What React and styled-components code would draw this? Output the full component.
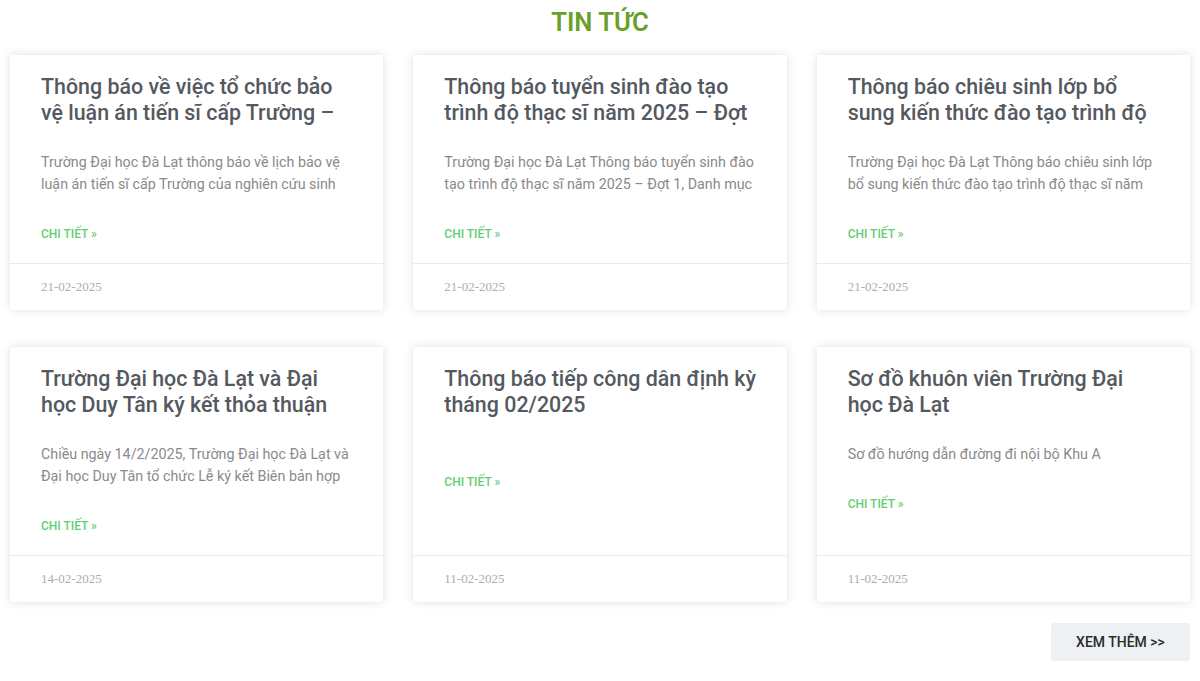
import React from "react";
import styled, { createGlobalStyle } from "styled-components";

const GlobalStyle = createGlobalStyle`
  body {
    margin: 0;
    background: #fff;
    font-family: Roboto, "Noto Sans", sans-serif;
  }
`;

const Section = styled.section`
  width: 1200px;
  padding: 8px 10px 20px;
  box-sizing: border-box;
`;

const Heading = styled.h2`
  margin: 0 0 19px;
  text-align: center;
  font-size: 25.6px;
  line-height: 28px;
  font-weight: 600;
  color: #6a9f2a;
`;

const Grid = styled.div`
  display: grid;
  grid-template-columns: repeat(3, 1fr);
  column-gap: 30px;
  row-gap: 37px;
`;

const Card = styled.article`
  display: flex;
  flex-direction: column;
  background: #fff;
  border-radius: 3px;
  box-shadow: 0 0 10px rgba(0, 0, 0, 0.13);
  overflow: hidden;
`;

const Body = styled.div`
  flex: 1;
  display: flex;
  flex-direction: column;
  padding: 19px 28px 21px 31px;
`;

const Title = styled.h3`
  margin: 0 0 25px;
  font-size: 21.4px;
  line-height: 26px;
  font-weight: 500;
  color: #54595f;
  max-height: 52px;
  overflow: hidden;
`;

const Excerpt = styled.p`
  margin: 0 0 28px;
  font-size: 14.3px;
  line-height: 22px;
  color: #8a8a8a;
  max-height: 44px;
  overflow: hidden;
`;

const ReadMore = styled.a`
  font-size: 12px;
  line-height: 14px;
  font-weight: 500;
  color: #61ce70;
  text-transform: uppercase;
  text-decoration: none;
`;

const Meta = styled.div`
  border-top: 1px solid #eaeaea;
  padding: 0 31px;
  height: 46px;
  display: flex;
  align-items: center;
  font-family: "Liberation Serif", serif;
  font-size: 13px;
  color: #adadad;
`;

const Footer = styled.div`
  display: flex;
  justify-content: flex-end;
  margin-top: 21px;
`;

const MoreButton = styled.button`
  width: 139px;
  height: 38px;
  border: none;
  border-radius: 3px;
  background: #eef1f4;
  color: #2b2b2b;
  font-family: Roboto, sans-serif;
  font-size: 14px;
  font-weight: 500;
  cursor: pointer;
`;

const posts = [
  {
    title: "Thông báo về việc tổ chức bảo vệ luận án tiến sĩ cấp Trường – Nghiên cứu sinh",
    excerpt: "Trường Đại học Đà Lạt thông báo về lịch bảo vệ luận án tiến sĩ cấp Trường của nghiên cứu sinh Nguyễn",
    date: "21-02-2025",
  },
  {
    title: "Thông báo tuyển sinh đào tạo trình độ thạc sĩ năm 2025 – Đợt 1",
    excerpt: "Trường Đại học Đà Lạt Thông báo tuyển sinh đào tạo trình độ thạc sĩ năm 2025 – Đợt 1, Danh mục ngành",
    date: "21-02-2025",
  },
  {
    title: "Thông báo chiêu sinh lớp bổ sung kiến thức đào tạo trình độ thạc sĩ năm 2025",
    excerpt: "Trường Đại học Đà Lạt Thông báo chiêu sinh lớp bổ sung kiến thức đào tạo trình độ thạc sĩ năm 2025",
    date: "21-02-2025",
  },
  {
    title: "Trường Đại học Đà Lạt và Đại học Duy Tân ký kết thỏa thuận hợp tác",
    excerpt: "Chiều ngày 14/2/2025, Trường Đại học Đà Lạt và Đại học Duy Tân tổ chức Lễ ký kết Biên bản hợp tác",
    date: "14-02-2025",
  },
  {
    title: "Thông báo tiếp công dân định kỳ tháng 02/2025",
    excerpt: "",
    date: "11-02-2025",
  },
  {
    title: "Sơ đồ khuôn viên Trường Đại học Đà Lạt",
    excerpt: "Sơ đồ hướng dẫn đường đi nội bộ Khu A",
    date: "11-02-2025",
  },
];

export default function App() {
  return (
    <>
      <GlobalStyle />
      <Section>
        <Heading>TIN TỨC</Heading>
        <Grid>
          {posts.map((p, i) => (
            <Card key={i}>
              <Body>
                <Title>{p.title}</Title>
                <Excerpt>{p.excerpt}</Excerpt>
                <div>
                  <ReadMore href="#">Chi tiết »</ReadMore>
                </div>
              </Body>
              <Meta>{p.date}</Meta>
            </Card>
          ))}
        </Grid>
        <Footer>
          <MoreButton>XEM THÊM &gt;&gt;</MoreButton>
        </Footer>
      </Section>
    </>
  );
}
